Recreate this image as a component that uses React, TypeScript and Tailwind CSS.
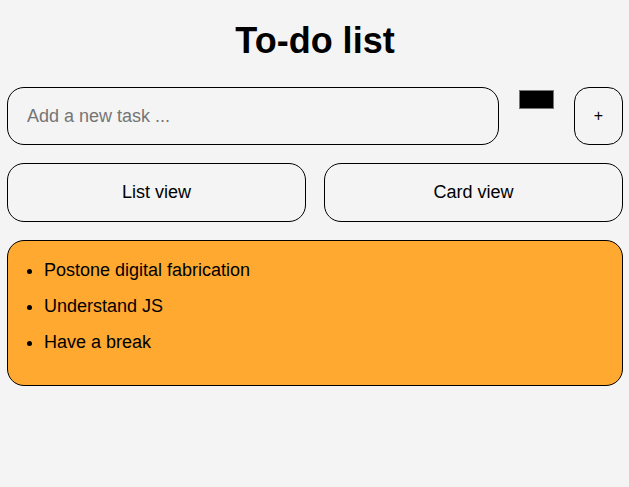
import React from "react";

export default function App() {
  const tasks = ["Postone digital fabrication", "Understand JS", "Have a break"];
  return (
    <div className="min-h-[487px] w-full bg-[#f4f4f4] text-black" style={{ fontFamily: '"Liberation Sans", Arial, sans-serif' }}>
      <div className="ml-[7px] w-[616px] pt-[21px]">
        <h1 className="mb-[26px] text-center text-[36px] font-bold leading-[40px]">To-do list</h1>
        <div className="flex items-start">
          <input
            type="text"
            placeholder="Add a new task ..."
            className="h-[58px] w-[492px] rounded-[17px] border border-black bg-transparent px-[19px] text-[18px] outline-none placeholder:text-[#757575]"
          />
          <div className="ml-[20px] mt-[3px] h-[19px] w-[35px] border border-[#767676] bg-black" />
          <button className="ml-[20px] flex h-[58px] w-[49px] items-center justify-center rounded-[15px] border border-black bg-transparent text-[16px]">
            +
          </button>
        </div>
        <div className="mt-[18px] grid grid-cols-2 gap-[18px]">
          <button className="h-[59px] rounded-[17px] border border-black bg-transparent text-[18px]">List view</button>
          <button className="h-[59px] rounded-[17px] border border-black bg-transparent text-[18px]">Card view</button>
        </div>
        <div className="mt-[18px] rounded-[17px] border border-black bg-[#ffa931] pb-[25px] pt-[11px]">
          <ul className="list-disc pl-[36px] text-[18px]">
            {tasks.map((t) => (
              <li key={t} className="leading-[36px]">
                {t}
              </li>
            ))}
          </ul>
        </div>
      </div>
    </div>
  );
}
